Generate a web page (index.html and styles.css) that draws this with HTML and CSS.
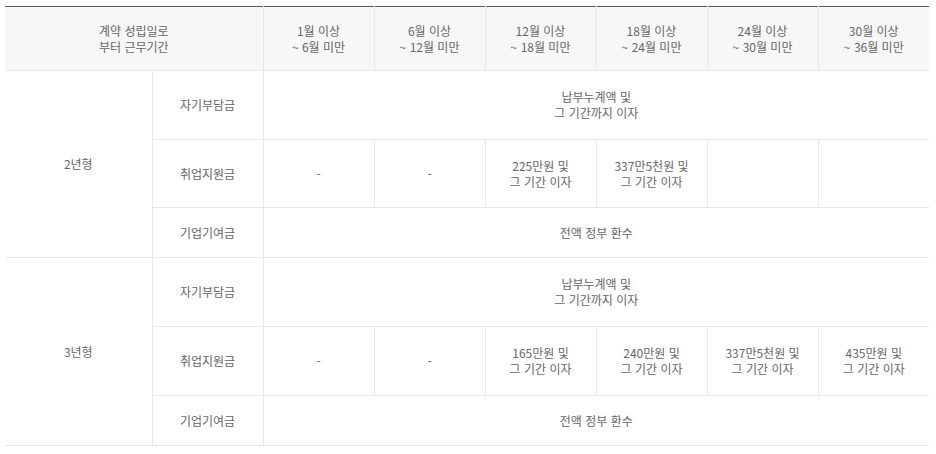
FILE: index.html
```html
<!DOCTYPE html>
<html lang="ko">
<head>
<meta charset="utf-8">
<link rel="stylesheet" href="styles.css">
</head>
<body>
<div class="wrap">
<table class="tbl">
  <colgroup>
    <col class="c-type"><col class="c-item">
    <col class="c-per"><col class="c-per"><col class="c-per"><col class="c-per"><col class="c-per"><col class="c-per">
  </colgroup>
  <thead>
    <tr class="head">
      <th colspan="2">계약 성립일로<br>부터 근무기간</th>
      <th>1월 이상<br>~ 6월 미만</th>
      <th>6월 이상<br>~ 12월 미만</th>
      <th>12월 이상<br>~ 18월 미만</th>
      <th>18월 이상<br>~ 24월 미만</th>
      <th>24월 이상<br>~ 30월 미만</th>
      <th>30월 이상<br>~ 36월 미만</th>
    </tr>
  </thead>
  <tbody>
    <tr class="two">
      <td rowspan="3" class="type">2년형</td>
      <td>자기부담금</td>
      <td colspan="6">납부누계액 및<br>그 기간까지 이자</td>
    </tr>
    <tr class="two short">
      <td>취업지원금</td>
      <td>-</td>
      <td>-</td>
      <td>225만원 및<br>그 기간 이자</td>
      <td>337만5천원 및<br>그 기간 이자</td>
      <td></td>
      <td></td>
    </tr>
    <tr class="one">
      <td>기업기여금</td>
      <td colspan="6">전액 정부 환수</td>
    </tr>
    <tr class="two">
      <td rowspan="3" class="type">3년형</td>
      <td>자기부담금</td>
      <td colspan="6">납부누계액 및<br>그 기간까지 이자</td>
    </tr>
    <tr class="two">
      <td>취업지원금</td>
      <td>-</td>
      <td>-</td>
      <td>165만원 및<br>그 기간 이자</td>
      <td>240만원 및<br>그 기간 이자</td>
      <td>337만5천원 및<br>그 기간 이자</td>
      <td>435만원 및<br>그 기간 이자</td>
    </tr>
    <tr class="one">
      <td>기업기여금</td>
      <td colspan="6">전액 정부 환수</td>
    </tr>
  </tbody>
</table>
</div>
</body>
</html>
```

FILE: styles.css
```css
html, body {
  margin: 0;
  padding: 0;
  background: #fff;
}
.wrap {
  padding: 6px 0 0 5px;
}
.tbl {
  width: 924px;
  table-layout: fixed;
  border-collapse: collapse;
  border-top: 1px solid #5a5a5a;
  font-family: "Noto Sans CJK KR", "Noto Sans", sans-serif;
  font-size: 12px;
  line-height: 16px;
  color: #666;
}
.c-type { width: 147px; }
.c-item { width: 111px; }
.c-per { width: 111px; }
.tbl th, .tbl td {
  padding: 0;
  text-align: center;
  vertical-align: middle;
  font-weight: normal;
  border: 1px solid #e8e8e8;
}
.tbl tr > :first-child { border-left: none; }
.tbl tr > :last-child { border-right: none; }
.tbl td[colspan="6"] { border-right: none; }
.head th {
  background: #f7f7f7;
  height: 63px;
  border-top: none;
}
.two { height: 69px; }
.two.short { height: 68px; }
.one { height: 50px; }
.type { border-left: none; }
```
